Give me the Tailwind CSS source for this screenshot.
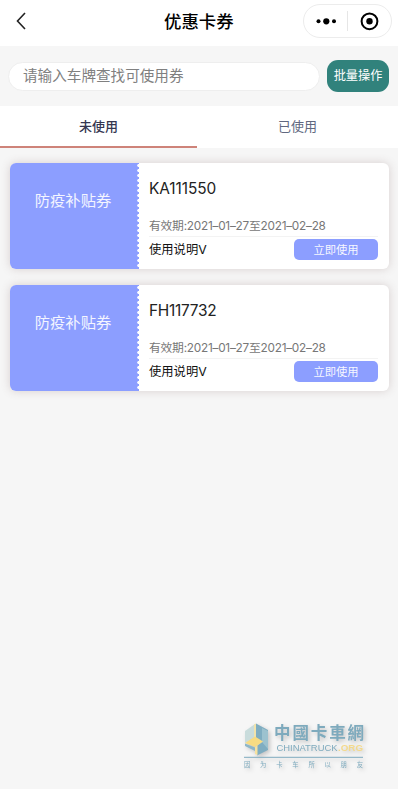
<!DOCTYPE html>
<html lang="zh-CN">
<head>
<meta charset="utf-8">
<title>优惠卡券</title>
<script src="https://cdn.jsdelivr.net/npm/@tailwindcss/browser@4"></script>
</head>
<body class="h-[792px] w-[400px] overflow-hidden bg-white font-['Inter','Noto_Sans_CJK_SC',sans-serif]">
<div class="relative flex h-[789px] w-[398px] flex-col bg-[#f6f6f6]">
  <header class="flex h-[46px] items-center bg-white pr-[6px] pl-[15px]">
    <svg class="-mt-1 h-[18px] w-[12px]" viewBox="0 0 12 18" fill="none" stroke="#222" stroke-width="1.6"><path d="M10 1 L2.5 9 L10 17"/></svg>
    <h1 class="-mt-0.5 ml-[137px] w-[72px] text-[17.4px] leading-[24px] font-medium whitespace-nowrap text-black">优惠卡券</h1>
    <div class="-mt-1 ml-auto flex h-[34px] w-[89px] items-center rounded-full border border-[#ececec]">
      <svg class="h-[32px] w-full" viewBox="0 0 87 32"><g fill="#000"><circle cx="14.5" cy="16.3" r="2"/><circle cx="22.3" cy="16.3" r="3.1"/><circle cx="30" cy="16.3" r="2"/><circle cx="65.5" cy="16.3" r="3.2"/></g><circle cx="65.5" cy="16.3" r="7.9" fill="none" stroke="#000" stroke-width="2"/><path d="M43.5 6V26" stroke="#e6e6e6"/></svg>
    </div>
  </header>
  <section class="flex h-[60px] items-center pr-[9px] pl-[8px]">
    <div class="flex h-[29px] w-[312px] items-center rounded-full border border-[#eeeeee] bg-white pl-[14px] text-[14.6px] leading-none text-[#808080]">请输入车牌查找可使用券</div>
    <button class="ml-auto h-[32px] w-[62px] rounded-[11px] bg-[#31827c] text-[12.2px] leading-none whitespace-nowrap text-white">批量操作</button>
  </section>
  <nav class="flex h-[42px] bg-white text-[13px] leading-[41px]">
    <div class="w-[197px] border-b-2 border-[#ce8379] text-center font-medium text-[#343650]">未使用</div>
    <div class="flex-1 text-center text-[#606880]">已使用</div>
  </nav>
  <main class="flex flex-col gap-[16px] pt-[15px] pr-[9px] pl-[10px]">
    <article class="flex h-[106px] overflow-hidden rounded-[6px] bg-white shadow-[0_0_10px_rgba(110,75,75,0.22)]">
      <div class="flex w-[129px] justify-end bg-[#8c9eff]">
        <div class="w-[127px] pt-[26px] pr-px text-center text-[15.3px] leading-[24px] text-white/90">防疫补贴券</div>
        <div class="w-[2px] bg-[radial-gradient(circle_at_2px_2.5px,#ffffff_1.4px,transparent_2px)] bg-[length:2px_5px]"></div>
      </div>
      <div class="flex flex-1 flex-col pr-[11px] pl-[10px]">
        <div class="mt-[15px] h-[22px] text-[15.4px] leading-[22px] tracking-[-0.05px] text-[#222]">KA111550</div>
        <div class="mt-[17px] h-[18px] text-[11.8px] leading-[18px] tracking-[-0.24px] whitespace-nowrap text-[#777]">有效期:2021–01–27至2021–02–28</div>
        <div class="mt-px flex items-start justify-between border-t border-[#f3f3f3]">
          <div class="pt-[2px] text-[12.3px] leading-[22px] text-[#111]">使用说明<span class="text-[12.3px]">V</span></div>
          <button class="mt-[2px] h-[21px] w-[84px] rounded-[5px] bg-[#8c9eff] text-[11.3px] leading-[20px] text-white/95">立即使用</button>
        </div>
      </div>
    </article>
    <article class="flex h-[106px] overflow-hidden rounded-[6px] bg-white shadow-[0_0_10px_rgba(110,75,75,0.22)]">
      <div class="flex w-[129px] justify-end bg-[#8c9eff]">
        <div class="w-[127px] pt-[26px] pr-px text-center text-[15.3px] leading-[24px] text-white/90">防疫补贴券</div>
        <div class="w-[2px] bg-[radial-gradient(circle_at_2px_2.5px,#ffffff_1.4px,transparent_2px)] bg-[length:2px_5px]"></div>
      </div>
      <div class="flex flex-1 flex-col pr-[11px] pl-[10px]">
        <div class="mt-[15px] h-[22px] text-[15.4px] leading-[22px] tracking-[-0.25px] text-[#222]">FH117732</div>
        <div class="mt-[17px] h-[18px] text-[11.8px] leading-[18px] tracking-[-0.24px] whitespace-nowrap text-[#777]">有效期:2021–01–27至2021–02–28</div>
        <div class="mt-px flex items-start justify-between border-t border-[#f3f3f3]">
          <div class="pt-[2px] text-[12.3px] leading-[22px] text-[#111]">使用说明<span class="text-[12.3px]">V</span></div>
          <button class="mt-[2px] h-[21px] w-[84px] rounded-[5px] bg-[#8c9eff] text-[11.3px] leading-[20px] text-white/95">立即使用</button>
        </div>
      </div>
    </article>
  </main>
  <svg class="absolute top-[718px] left-[240px] h-[60px] w-[130px] drop-shadow-[2px_2px_2px_rgba(0,0,0,0.2)]" viewBox="0 0 130 60">
    <path d="M5 13 L15 6 V19 L5 25Z" fill="#c9dcdc"/>
    <path d="M14 6.5 L16 5.5 V20 L14 20Z" fill="#f1e3ac"/>
    <path d="M16 5.5 L28 12 V32 L17 37.5 V28 L22 24 L16 20Z" fill="#7fadc1"/>
    <path d="M22 10 L28 13 V31 L22 24Z" fill="#9cc2cf"/>
    <path d="M5 25 L15 18.5 L23 23.5 L15 29Z" fill="#f7dc83"/>
    <path d="M5 25.5 L15 29.5 V33 L5 28Z" fill="#8eb7c8"/>
    <path d="M15 29 L17.5 27.5 V37 L15 36Z" fill="#f7e2a0"/>
    <g fill="#7eaabd">
      <text x="34" y="21" font-size="16.5" font-weight="700" textLength="90" font-family="Noto Sans CJK TC">中國卡車網</text>
      <text x="36.5" y="33" font-size="8.5" textLength="61" lengthAdjust="spacingAndGlyphs" font-family="Liberation Sans">CHINATRUCK</text>
      <text x="4" y="49" font-size="6.3" textLength="119" font-family="Noto Sans CJK SC">因为卡车所以朋友</text>
      <rect x="4" y="38.8" width="119" height="1"/>
    </g>
    <text x="98" y="33" font-size="8.5" font-weight="700" textLength="25" lengthAdjust="spacingAndGlyphs" fill="#f3d98c" font-family="Liberation Sans">.ORG</text>
  </svg>
</div>
</body>
</html>
